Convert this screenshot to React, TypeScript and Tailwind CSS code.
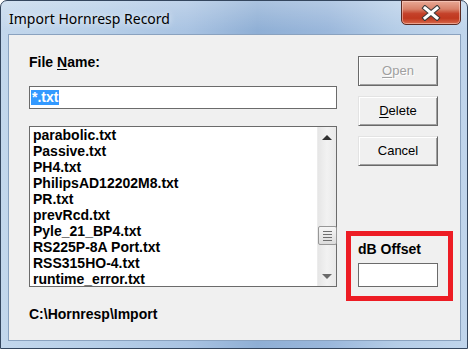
import React from "react";

const files = [
  "parabolic.txt",
  "Passive.txt",
  "PH4.txt",
  "PhilipsAD12202M8.txt",
  "PR.txt",
  "prevRcd.txt",
  "Pyle_21_BP4.txt",
  "RS225P-8A Port.txt",
  "RSS315HO-4.txt",
  "runtime_error.txt",
];

const F = { fontFamily: '"Liberation Sans", Arial, sans-serif' };

function Btn({ children, def }: { children: React.ReactNode; def?: boolean }) {
  return (
    <div
      className={
        "w-[80px] h-[30px] flex items-center justify-center text-[13px] " +
        (def
          ? "border border-[#6a6a6a] shadow-[inset_1px_1px_0_#ffffff,inset_-1px_-1px_0_#a0a0a0] text-[#a0a0a0] [text-shadow:1px_1px_0_#ffffff]"
          : "border border-t-[#e3e3e3] border-l-[#e3e3e3] border-r-[#696969] border-b-[#696969] shadow-[inset_1px_1px_0_#ffffff,inset_-1px_-1px_0_#a0a0a0] text-black")
      }
      style={F}
    >
      {children}
    </div>
  );
}

export default function App() {
  return (
    <div className="w-[468px] h-[349px] relative overflow-hidden bg-white">
      <div
        className="w-[468px] h-[349px] rounded-t-[7px] border border-[#34465e] flex flex-col"
        style={{
          background:
            "linear-gradient(180deg, rgba(255,255,255,0.25) 0px, rgba(255,255,255,0) 30px), linear-gradient(90deg, #c3d7ec 0%, #b7cfe8 20%, #a9c3e2 40%, #8fafd5 55%, #9ab7db 70%, #b5cde7 85%, #c0d5ec 100%)",
        }}
      >
        {/* title bar */}
        <div className="h-[33px] flex items-start relative">
          <div
            className="pl-[8px] pt-[9px] text-[14px] leading-[18px] text-black [text-shadow:0_0_6px_rgba(255,255,255,0.9)]"
            style={{ fontFamily: '"Noto Sans", "Open Sans", sans-serif' }}
          >
            Import Hornresp Record
          </div>
          <div
            className="absolute left-[400px] top-[-1px] w-[60px] h-[25px] rounded-b-[5px] border border-[#5b2a22] flex items-center justify-center shadow-[inset_0_0_0_1px_rgba(255,220,210,0.5)]"
            style={{
              background:
                "linear-gradient(180deg, #e8a996 0%, #d8826a 35%, #c4412a 55%, #c0381f 75%, #d86a4c 100%)",
            }}
          >
            <svg width="22" height="16" viewBox="0 0 22 16">
              <path d="M5 3 L17 13 M17 3 L5 13" stroke="#3a3a3a" strokeWidth="5" strokeLinecap="square" />
              <path d="M5 3 L17 13 M17 3 L5 13" stroke="#ffffff" strokeWidth="3" strokeLinecap="square" />
            </svg>
          </div>
        </div>
        {/* client */}
        <div className="ml-[7px] w-[453px] h-[307px] border border-[#8aa2bf] bg-[#f0f0f0] flex">
          {/* left column */}
          <div className="pl-[20px] pt-[19px] w-[328px] flex flex-col">
            <div className="h-[16px] text-[14px] leading-[16px] font-bold text-black" style={F}>
              File <span className="underline underline-offset-[2px]">N</span>ame:
            </div>
            <div className="mt-[16px] w-[308px] h-[23px] border border-[#6b6b6b] bg-white flex items-center pl-[1px]">
              <span
                className="bg-[#3399ff] text-white text-[14px] leading-[15px] font-bold px-[1px]"
                style={F}
              >
                *.txt
              </span>
            </div>
            <div className="mt-[17px] w-[308px] h-[161px] border border-[#6b6b6b] bg-white flex">
              <div className="flex-1 pl-[3px] overflow-hidden">
                {files.map((f) => (
                  <div key={f} className="h-[16px] text-[14px] leading-[16px] font-bold text-black whitespace-nowrap" style={F}>
                    {f}
                  </div>
                ))}
              </div>
              <div className="w-[19px] h-full bg-gradient-to-r from-[#e6e6e6] via-[#f2f2f2] to-[#e9e9e9] border-l border-[#ececec] relative">
                <svg width="10" height="6" viewBox="0 0 10 6" className="absolute top-[8px] left-[4px]">
                  <path d="M5 0 L10 5 L0 5 Z" fill="#303030" />
                </svg>
                <div className="absolute top-[99px] left-[0px] w-[19px] h-[19px] rounded-[2px] border border-[#979797] bg-gradient-to-b from-[#f6f6f6] to-[#dcdcdc] flex flex-col items-center justify-center gap-[2px]">
                  <div className="w-[9px] h-[1px] bg-[#6f6f6f]" />
                  <div className="w-[9px] h-[1px] bg-[#6f6f6f]" />
                  <div className="w-[9px] h-[1px] bg-[#6f6f6f]" />
                  <div className="w-[9px] h-[1px] bg-[#6f6f6f]" />
                </div>
                <svg width="10" height="6" viewBox="0 0 10 6" className="absolute top-[147px] left-[4px]">
                  <path d="M0 0 L10 0 L5 5 Z" fill="#6a6a6a" />
                </svg>
              </div>
            </div>
            <div className="mt-[19px] h-[16px] text-[14px] leading-[16px] font-bold text-black" style={F}>
              C:\Hornresp\Import
            </div>
          </div>
          {/* right column */}
          <div className="pl-[9px] pt-[21px] flex flex-col">
            <div className="ml-[12px] flex flex-col gap-[10px]">
              <Btn def>
                <span className="underline underline-offset-[2px]">O</span>pen
              </Btn>
              <Btn>
                <span className="underline underline-offset-[2px]">D</span>elete
              </Btn>
              <Btn>Cancel</Btn>
            </div>
            <div className="mt-[65px] w-[107px] h-[70px] border-[5px] border-[#ed1c24] pl-[7px] pt-[5px] flex flex-col">
              <div className="h-[16px] text-[14px] leading-[16px] font-bold text-black" style={F}>
                dB Offset
              </div>
              <div className="mt-[6px] w-[80px] h-[24px] border border-[#6b6b6b] bg-white" />
            </div>
          </div>
        </div>
      </div>
    </div>
  );
}
